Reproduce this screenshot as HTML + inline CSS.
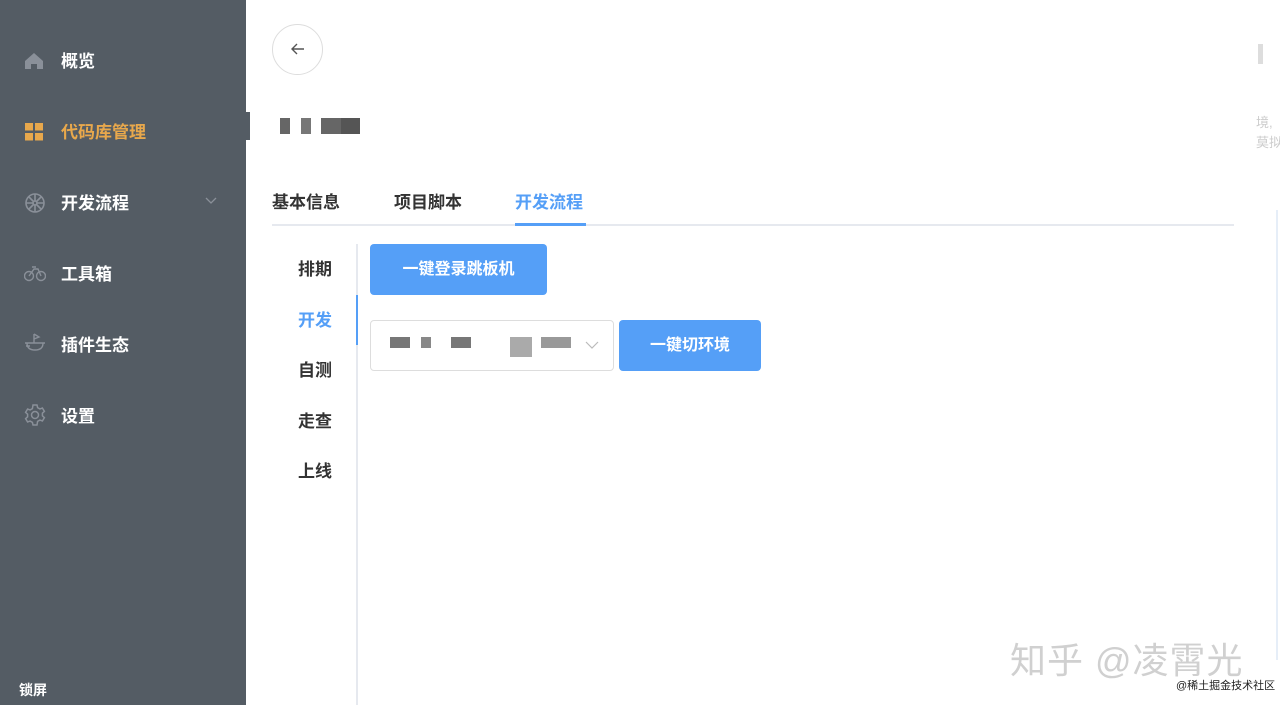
<!DOCTYPE html>
<html><head><meta charset="utf-8"><style>
*{margin:0;padding:0;box-sizing:border-box}
body{width:1280px;height:705px;overflow:hidden;background:#fff;position:relative;font-family:"Liberation Sans","Noto Sans CJK SC",sans-serif}
.side{position:absolute;left:0;top:0;width:246px;height:705px;background:#545c64}
.item{position:absolute;left:61px;font-size:17px;font-weight:bold;color:#fff}
.ic{position:absolute;left:24px}
.abs{position:absolute}
.btn{position:absolute;background:#559ff7;color:#fff;border-radius:4px;font-size:16px;font-weight:bold;text-align:center}
.blk{position:absolute;background:#999}
</style></head><body>
<div class="side">
<svg class="ic" style="top:52px" width="20" height="18" viewBox="0 0 20 18"><path d="M10 1L1 9v8h6v-5h6v5h6V9z" fill="#8a9099"/></svg>
<div class="item" style="top:47px">概览</div>
<svg class="ic" style="top:123px" width="20" height="18"><rect x="1" y="0" width="8" height="7.5" fill="#e8a84c"/><rect x="11" y="0" width="8" height="7.5" fill="#e8a84c"/><rect x="1" y="10" width="8" height="7.5" fill="#e8a84c"/><rect x="11" y="10" width="8" height="7.5" fill="#e8a84c"/></svg>
<div class="item" style="top:118px;color:#e8a84c">代码库管理</div>
<svg class="ic" style="top:192px" width="22" height="22" viewBox="0 0 22 22" fill="none" stroke="#8a9099" stroke-width="1.6"><circle cx="11" cy="11" r="9"/><circle cx="11" cy="11" r="2"/><path d="M11 2v7M11 13v7M2 11h7M13 11h7M5 5l4.5 4.5M12.5 12.5L17 17M17 5l-4.5 4.5M9.5 12.5L5 17"/></svg>
<div class="item" style="top:189px">开发流程</div>
<svg class="abs" style="left:205px;top:197px" width="12" height="8"><path d="M1 1l5 5 5-5" stroke="#8a9099" fill="none" stroke-width="1.3"/></svg>
<svg class="ic" style="top:264px" width="22" height="18" fill="none" stroke="#8a9099" stroke-width="1.4"><circle cx="5" cy="12" r="4.5"/><circle cx="17" cy="12" r="4.5"/><path d="M5 12l5-7h4l3 7M8 3h4"/></svg>
<div class="item" style="top:260px">工具箱</div>
<svg class="ic" style="top:332px" width="22" height="22" fill="none" stroke="#8a9099" stroke-width="1.4"><path d="M10 2v9M10 2l5 3-5 2M1 11h20M3 11c0 5 3 7 8 7s8-2 8-7M2 14h4"/></svg>
<div class="item" style="top:331px">插件生态</div>
<svg class="ic" style="top:404px" width="22" height="22" viewBox="0 0 22 22" fill="none" stroke="#8a9099" stroke-width="1.5"><path d="M9 1h4l.6 2.6 2.3 1.3 2.5-.9 2 3.4-2 1.8v2.6l2 1.8-2 3.4-2.5-.9-2.3 1.3L13 21H9l-.6-2.6-2.3-1.3-2.5.9-2-3.4 2-1.8V10.2l-2-1.8 2-3.4 2.5.9 2.3-1.3z"/><circle cx="11" cy="11" r="3.5"/></svg>
<div class="item" style="top:402px">设置</div>
<div class="abs" style="left:19px;top:680px;color:#fff;font-size:14px;font-weight:bold">锁屏</div>
</div>
<div class="abs" style="left:246px;top:112px;width:4px;height:28px;background:#545c64"></div>
<div class="abs" style="left:272px;top:24px;width:51px;height:51px;border:1px solid #ddd;border-radius:50%"></div>
<svg class="abs" style="left:290px;top:42px" width="15" height="14"><path d="M14 7H2M7 2L2 7l5 5" stroke="#555" fill="none" stroke-width="1.4"/></svg>
<div class="blk" style="left:280px;top:118px;width:10px;height:16px;background:#666"></div>
<div class="blk" style="left:301px;top:118px;width:10px;height:16px;background:#777"></div>
<div class="blk" style="left:321px;top:118px;width:20px;height:16px;background:#666"></div>
<div class="blk" style="left:341px;top:118px;width:19px;height:16px;background:#555"></div>
<div class="abs" style="left:272px;top:188px;font-size:17px;font-weight:bold;color:#333">基本信息</div>
<div class="abs" style="left:394px;top:188px;font-size:17px;font-weight:bold;color:#333">项目脚本</div>
<div class="abs" style="left:515px;top:188px;font-size:17px;font-weight:bold;color:#559ff7">开发流程</div>
<div class="abs" style="left:272px;top:224px;width:962px;height:2px;background:#e6e9ef"></div>
<div class="abs" style="left:515px;top:223px;width:71px;height:3px;background:#559ff7"></div>
<div class="abs" style="left:356px;top:244px;width:2px;height:461px;background:#e6e9ef"></div>
<div class="abs" style="left:356px;top:295px;width:2px;height:50px;background:#559ff7"></div>
<div class="abs" style="left:298px;top:245px;font-size:17px;font-weight:bold;color:#333;line-height:50.5px">排期<br><span style="color:#559ff7">开发</span><br>自测<br>走查<br>上线</div>
<div class="btn" style="left:370px;top:244px;width:177px;height:51px;line-height:51px">一键登录跳板机</div>
<div class="abs" style="left:370px;top:320px;width:244px;height:51px;border:1px solid #ddd;border-radius:4px"></div>
<div class="blk" style="left:390px;top:337px;width:20px;height:11px;background:#777"></div>
<div class="blk" style="left:421px;top:337px;width:10px;height:11px;background:#888"></div>
<div class="blk" style="left:451px;top:337px;width:20px;height:11px;background:#777"></div>
<div class="blk" style="left:510px;top:337px;width:22px;height:20px;background:#aaa"></div>
<div class="blk" style="left:541px;top:337px;width:30px;height:11px;background:#999"></div>
<svg class="abs" style="left:585px;top:341px" width="14" height="8"><path d="M1 1l6 6 6-6" stroke="#bbb" fill="none" stroke-width="1.2"/></svg>
<div class="btn" style="left:619px;top:320px;width:142px;height:51px;line-height:51px">一键切环境</div>
<div class="abs" style="left:1258px;top:44px;width:5px;height:20px;background:#ddd"></div>
<div class="abs" style="left:1256px;top:113px;font-size:13px;color:#ccc;line-height:20px;white-space:nowrap">境,<br>莫拟</div>
<div class="abs" style="left:1276px;top:210px;width:2px;height:450px;background:#e6eef8"></div>
<div class="abs" style="left:1010px;top:632px;font-size:36px;color:#d0d0d0;letter-spacing:1px;white-space:nowrap">知乎 @凌霄光</div>
<div class="abs" style="left:1176px;top:677px;font-size:11px;color:#222;white-space:nowrap">@稀土掘金技术社区</div>
</body></html>
